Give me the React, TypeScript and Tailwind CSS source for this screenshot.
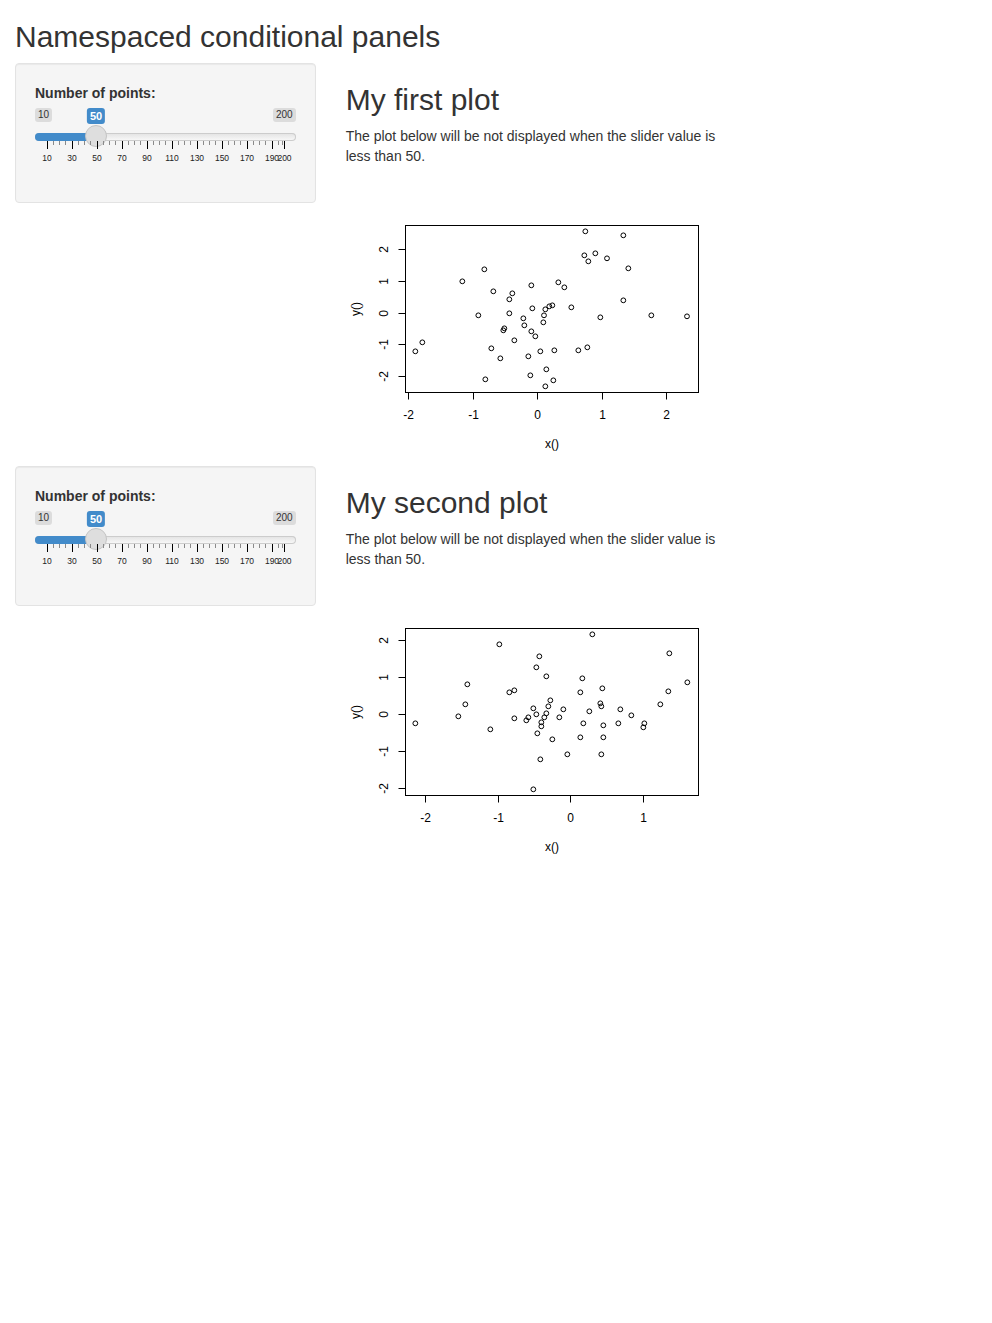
import React from 'react'

type Pt = [number, number]
type Tick = { label: string; pos: number }

// point positions measured off the original plots (3x scale), mapped into the svg below
const firstPoints: Pt[] = [
  [736, 49], [850, 61], [733, 121], [766, 115], [745, 139], [801, 130], [865, 160], [433, 163],
  [367, 199], [574, 211], [655, 202], [673, 217], [460, 229], [517, 235], [508, 253], [850, 256],
  [577, 280], [628, 274], [637, 271], [616, 283], [694, 277], [415, 301], [508, 295], [612, 301],
  [934, 301], [1041, 304], [781, 307], [550, 310], [610, 322], [553, 331], [493, 340], [490, 346],
  [574, 349], [586, 364], [523, 376], [247, 382], [226, 409], [454, 400], [601, 409], [643, 406],
  [715, 406], [742, 397], [565, 424], [481, 430], [619, 463], [571, 481], [436, 493], [640, 496],
  [616, 514],
]

const secondPoints: Pt[] = [
  [757, 49], [478, 79], [988, 106], [598, 115], [589, 148], [619, 175], [727, 181], [382, 199],
  [1042, 193], [508, 223], [523, 217], [721, 223], [787, 211], [985, 220], [631, 247], [376, 259],
  [781, 256], [961, 259], [625, 265], [784, 265], [580, 271], [670, 274], [748, 280], [841, 274],
  [355, 295], [589, 289], [619, 286], [565, 298], [613, 298], [658, 298], [874, 292], [523, 301],
  [559, 307], [604, 313], [226, 316], [730, 316], [835, 316], [913, 316], [790, 322], [604, 325],
  [910, 328], [451, 334], [592, 346], [721, 358], [790, 358], [637, 364], [682, 409], [784, 409],
  [601, 424], [580, 514],
]

const firstX: Tick[] = [
  { label: '-2', pos: 62.5 }, { label: '-1', pos: 127.5 }, { label: '0', pos: 191.5 },
  { label: '1', pos: 256.5 }, { label: '2', pos: 320.5 },
]
const firstY: Tick[] = [
  { label: '2', pos: 73.5 }, { label: '1', pos: 105.5 }, { label: '0', pos: 137.5 },
  { label: '-1', pos: 168.5 }, { label: '-2', pos: 200.5 },
]
const secondX: Tick[] = [
  { label: '-2', pos: 79.5 }, { label: '-1', pos: 152.5 }, { label: '0', pos: 224.5 },
  { label: '1', pos: 297.5 },
]
const secondY: Tick[] = [
  { label: '2', pos: 61.5 }, { label: '1', pos: 98.5 }, { label: '0', pos: 135.5 },
  { label: '-1', pos: 172.5 }, { label: '-2', pos: 209.5 },
]

const font = '"Liberation Sans", Arial, sans-serif'

function ScatterPlot({ points, xTicks, yTicks }: { points: Pt[]; xTicks: Tick[]; yTicks: Tick[] }) {
  const left = 59.5
  const top = 49.5
  const bottom = 216.5
  return (
    <svg width={382} height={290} className="block" fontFamily={font} fontSize={12}>
      <rect x={left} y={top} width={293} height={167} fill="none" stroke="#000" strokeWidth={1} />

      {/* x axis */}
      <line x1={xTicks[0].pos} x2={xTicks[xTicks.length - 1].pos} y1={bottom} y2={bottom} stroke="#000" />
      {xTicks.map((t) => (
        <g key={t.label}>
          <line x1={t.pos} x2={t.pos} y1={bottom} y2={bottom + 7} stroke="#000" />
          <text x={t.pos} y={243} textAnchor="middle" fill="#000">{t.label}</text>
        </g>
      ))}

      {/* y axis, labels turned like base R does */}
      <line x1={left} x2={left} y1={yTicks[0].pos} y2={yTicks[yTicks.length - 1].pos} stroke="#000" />
      {yTicks.map((t) => (
        <g key={t.label}>
          <line x1={left - 7} x2={left} y1={t.pos} y2={t.pos} stroke="#000" />
          <text
            x={37.5}
            y={t.pos}
            transform={`rotate(-90 37.5 ${t.pos})`}
            textAnchor="middle"
            dominantBaseline="central"
            fill="#000"
          >
            {t.label}
          </text>
        </g>
      ))}

      <text x={10} y={133} transform="rotate(-90 10 133)" textAnchor="middle" dominantBaseline="central" fill="#000">
        y()
      </text>
      <text x={206} y={268} textAnchor="middle" dominantBaseline="central" fill="#000">
        x()
      </text>

      {points.map(([zx, zy], i) => (
        <circle key={i} cx={zx / 3 - 6} cy={zy / 3 + 39} r={2.4} fill="none" stroke="#000" strokeWidth={1} />
      ))}
    </svg>
  )
}

const bigTicks = [10, 30, 50, 70, 90, 110, 130, 150, 170, 190, 200]
const smallTicks = [
  ...[10, 30, 50, 70, 90, 110, 130, 150, 170].flatMap((v) => [v + 5, v + 10, v + 15]),
  195,
  198,
]
const tickLeft = (v: number) => 11.5 + (v - 10) * 1.25

function PointsSlider() {
  return (
    <div className="flex h-[60px] w-full flex-col">
      {/* min / max, with the current value floating over */}
      <div className="relative flex h-[25px] items-start justify-between">
        <span className="rounded-[3px] bg-[#dcdcdc] px-[3px] py-px text-[10px] leading-[1.2] text-[#333]">10</span>
        <span className="rounded-[3px] bg-[#dcdcdc] px-[3px] py-px text-[10px] leading-[1.2] text-[#333]">200</span>
        <span className="absolute left-[61px] top-0 -translate-x-1/2 rounded-[3px] bg-[#428bca] px-[3px] py-px text-[11px] font-bold leading-[1.3] text-white">
          50
        </span>
      </div>

      {/* track */}
      <div className="relative flex h-2 rounded-full bg-gradient-to-b from-[#e2e2e2] to-[#fafafa] shadow-[inset_0_0_0_1px_#cccccc]">
        <div className="h-full w-[61px] rounded-l-full bg-[#428bca]" />
        <div className="absolute left-[50px] top-[-8px] h-[22px] w-[22px] rounded-full border border-[#c4c4c4] bg-[#dedede]" />
      </div>

      {/* grid */}
      <div className="relative flex-1">
        {smallTicks.map((v) => (
          <div key={`s${v}`} className="absolute top-0 h-[4px] w-px bg-[#8a8a8a]" style={{ left: tickLeft(v) }} />
        ))}
        {bigTicks.map((v) => (
          <div key={`b${v}`} className="absolute top-0 h-[8px] w-px bg-black" style={{ left: tickLeft(v) }} />
        ))}
        {bigTicks.map((v) => (
          <span
            key={`t${v}`}
            className="absolute top-[13px] -translate-x-1/2 text-[8.5px] leading-none text-[#222]"
            style={{ left: tickLeft(v) + 0.5 }}
          >
            {v}
          </span>
        ))}
      </div>
    </div>
  )
}

function PlotSection({ title, points, xTicks, yTicks }: { title: string; points: Pt[]; xTicks: Tick[]; yTicks: Tick[] }) {
  return (
    <div className="-mx-[15px] flex">
      <div className="w-1/3 px-[15px]">
        <div className="mb-5 rounded border border-[#e3e3e3] bg-[#f5f5f5] p-[19px] shadow-[inset_0_1px_1px_rgba(0,0,0,0.05)]">
          <div className="mb-[15px] flex flex-col gap-[5px]">
            <div className="text-sm font-bold leading-5 text-[#333]">Number of points:</div>
            <PointsSlider />
          </div>
        </div>
      </div>
      <div className="w-2/3 px-[15px]">
        <h2 className="mb-[10px] mt-5 text-[30px] leading-[1.1] text-[#333]">{title}</h2>
        <p className="mb-[10px] w-[380px] text-sm leading-5 text-[#333]">
          The plot below will be not displayed when the slider value is less than 50.
        </p>
        <ScatterPlot points={points} xTicks={xTicks} yTicks={yTicks} />
      </div>
    </div>
  )
}

export default function App() {
  return (
    <div className="min-h-[1323px] bg-white px-[15px] font-['Liberation_Sans',Arial,sans-serif] text-[#333]">
      <h2 className="mb-[10px] pt-5 text-[30px] leading-[1.1]">Namespaced conditional panels</h2>
      <PlotSection title="My first plot" points={firstPoints} xTicks={firstX} yTicks={firstY} />
      <PlotSection title="My second plot" points={secondPoints} xTicks={secondX} yTicks={secondY} />
    </div>
  )
}
